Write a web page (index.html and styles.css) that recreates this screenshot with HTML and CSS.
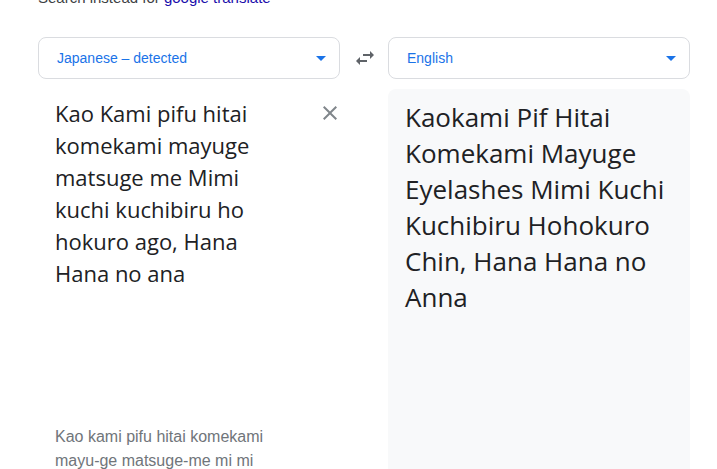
FILE: index.html
```html
<html>
<head>
    <meta charset="UTF-8"/>
    <title>Translate</title>
    <link rel="stylesheet" href="styles.css">
</head>
<body>
    <div class="search">Search instead for <a href="#">google translate</a></div>

    <div class="translator">
        <div class="lang">
            <span>Japanese – detected</span>
            <svg class="drop" width="24" height="24" viewBox="0 0 24 24"><path d="M7 10l5 5 5-5z"/></svg>
        </div>
        <div class="swap">
            <svg width="24" height="24" viewBox="0 0 24 24"><path d="M6.99 11L3 15l3.99 4v-3H14v-2H6.99v-3zM21 9l-3.99-4v3H10v2h7.01v3L21 9z"/></svg>
        </div>
        <div class="lang">
            <span>English</span>
            <svg class="drop" width="24" height="24" viewBox="0 0 24 24"><path d="M7 10l5 5 5-5z"/></svg>
        </div>

        <div class="source">
            <div class="source-text">Kao Kami pifu hitai komekami mayuge matsuge me Mimi kuchi kuchibiru ho hokuro ago, Hana Hana no ana</div>
            <svg class="clear" width="24" height="24" viewBox="0 0 24 24"><path d="M19 6.41L17.59 5 12 10.59 6.41 5 5 6.41 10.59 12 5 17.59 6.41 19 12 13.41 17.59 19 19 17.59 13.41 12z"/></svg>
            <div class="translit">Kao kami pifu hitai komekami mayu-ge matsuge-me mi mi</div>
        </div>
        <div></div>
        <div class="target">
            <div class="target-text">Kaokami Pif Hitai Komekami Mayuge Eyelashes Mimi Kuchi Kuchibiru Hohokuro Chin, Hana Hana no Anna</div>
        </div>
    </div>
</body>
</html>
```

FILE: styles.css
```css
html, body {
    height: 469px;
    overflow: hidden;
}

body {
    margin: 0px;
    padding: 0px;
    font-family: Arial, "Liberation Sans", sans-serif;
    color: #202124;
    background-color: #fff;
}

.search {
    margin-top: -12px;
    padding-left: 38px;
    font-size: 15px;
    line-height: 20px;
    color: #3c4043;
}
.search a {
    color: #1a0dab;
    text-decoration: none;
}

.translator {
    display: grid;
    grid-template-columns: 302px 48px 302px;
    row-gap: 10px;
    margin-top: 29px;
    padding-left: 38px;
}

.lang {
    display: flex;
    align-items: center;
    justify-content: space-between;
    box-sizing: border-box;
    height: 42px;
    padding: 0px 6px 0px 18px;
    border: solid 1px #dadce0;
    border-radius: 8px;
    font-size: 14px;
    color: #1a73e8;
}
.lang .drop {
    fill: #1a73e8;
}

.swap {
    display: flex;
    align-items: center;
    justify-content: center;
    padding-left: 2px;
}
.swap svg {
    fill: #5f6368;
}

.source {
    position: relative;
    padding: 8px 0px 0px 17px;
}
.source-text {
    width: 216px;
    min-height: 328px;
    font-family: "Open Sans", sans-serif;
    font-size: 22px;
    line-height: 32px;
}
.clear {
    position: absolute;
    top: 12px;
    right: -2px;
    fill: #80868b;
}
.translit {
    width: 225px;
    font-size: 16px;
    line-height: 24px;
    color: #70757a;
}

.target {
    min-height: 400px;
    padding: 10px 17px 0px 17px;
    border-radius: 8px;
    background-color: #f8f9fa;
}
.target-text {
    font-family: "Open Sans", sans-serif;
    font-size: 26px;
    line-height: 36px;
}
```
